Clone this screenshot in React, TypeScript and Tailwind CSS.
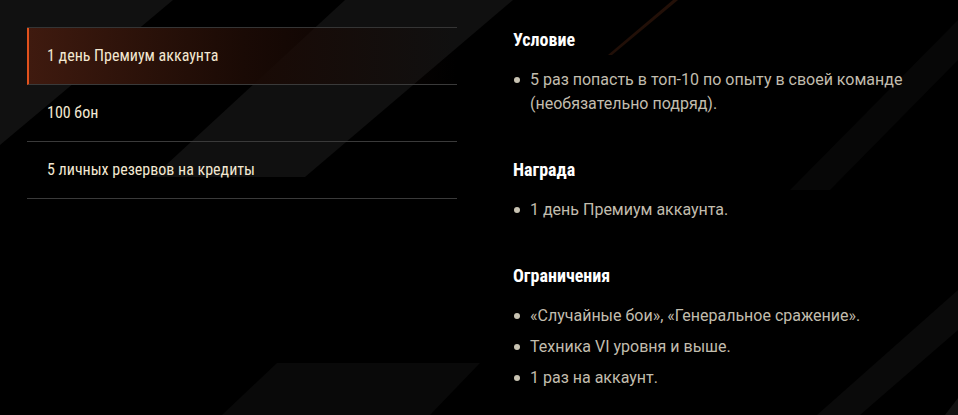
import React from "react";

const rows = [
  "1 день Премиум аккаунта",
  "100 бон",
  "5 личных резервов на кредиты",
];

const sections: { title: string; items: string[] }[] = [
  {
    title: "Условие",
    items: ["5 раз попасть в топ-10 по опыту в своей команде (необязательно подряд)."],
  },
  { title: "Награда", items: ["1 день Премиум аккаунта."] },
  {
    title: "Ограничения",
    items: [
      "«Случайные бои», «Генеральное сражение».",
      "Техника VI уровня и выше.",
      "1 раз на аккаунт.",
    ],
  },
];

function Background() {
  return (
    <svg
      className="absolute inset-0 h-full w-full"
      viewBox="0 0 958 415"
      preserveAspectRatio="none"
    >
      <defs>
        <linearGradient id="orangeLine" x1="0" y1="0" x2="1" y2="1">
          <stop offset="0" stopColor="#3a1a0c" />
          <stop offset="1" stopColor="#0a0503" />
        </linearGradient>
      </defs>
      <polygon points="0,0 173,0 0,145" fill="#111111" />
      <polygon points="345,0 513,0 305,177 153,177" fill="#101010" />
      <polygon points="673,0 678,0 612,55 608,55" fill="url(#orangeLine)" />
      <polygon points="958,20 958,60 830,190 790,190" fill="#070707" />
      <polygon points="277,363 480,363 430,415 222,415" fill="#090909" />
      <polygon points="958,290 958,330 860,415 817,415" fill="#0a0a0a" />
      <polygon points="958,398 958,415 945,415" fill="#121212" />
    </svg>
  );
}

export default function App() {
  return (
    <div className="relative h-[415px] w-[958px] overflow-hidden bg-black">
      <Background />
      <div className="relative flex gap-[56px] pl-[27px] pt-[27px]">
        <div className="w-[430px] shrink-0 border-t border-[#353535]">
          {rows.map((r, i) => (
            <div
              key={r}
              className={
                i === 0
                  ? "flex h-[57px] items-center border-b border-l-2 border-b-[#3a3a3a] border-l-[#e2521d] bg-gradient-to-r from-[#3f1a0f] via-[#1a0a05] to-transparent pl-[18px] text-[16px] text-[#f3e8d2] [font-family:Roboto,'Liberation_Sans',sans-serif] [font-stretch:condensed]"
                  : "flex h-[57px] items-center border-b border-[#3a3a3a] pl-[20px] text-[16px] text-[#f3e8d2] [font-family:Roboto,'Liberation_Sans',sans-serif] [font-stretch:condensed]"
              }
            >
              {r}
            </div>
          ))}
        </div>
        <div className="w-[400px] pt-[1px] [font-family:Roboto,'Liberation_Sans',sans-serif]">
          {sections.map((s) => (
            <div key={s.title} className="mb-[42px]">
              <h3 className="mb-[16px] text-[18px] leading-[24px] font-bold text-white [font-stretch:condensed]">
                {s.title}
              </h3>
              <ul>
                {s.items.map((it) => (
                  <li
                    key={it}
                    className="mb-[7px] flex text-[16px] leading-[24px] text-[#c2bdae]"
                  >
                    <span className="mt-[9px] mr-[10px] ml-[1px] h-[6px] w-[6px] shrink-0 rounded-full bg-[#c8c3b2]" />
                    <span>{it}</span>
                  </li>
                ))}
              </ul>
            </div>
          ))}
        </div>
      </div>
    </div>
  );
}
